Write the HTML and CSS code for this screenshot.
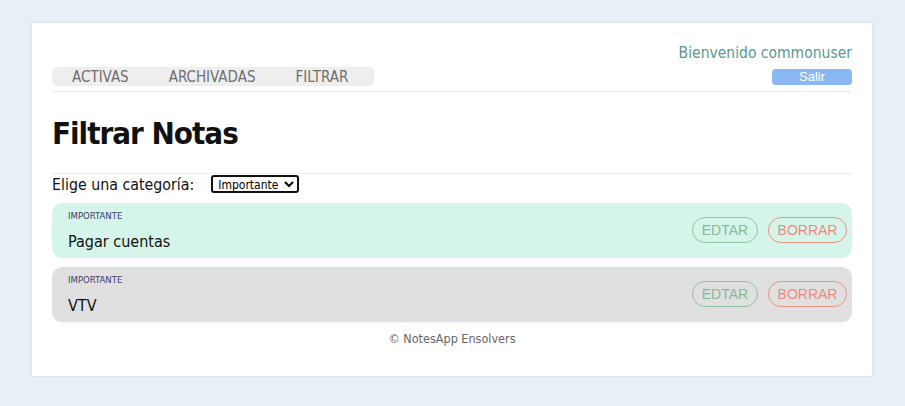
FILE: index.html
```html
<!DOCTYPE html>
<html lang="es">
<head>
<meta charset="utf-8">
<title>NotesApp</title>
<link rel="stylesheet" href="styles.css">
</head>
<body>
<div class="card">
  <header class="top">
    <nav class="nav">
      <a class="nav-item">ACTIVAS</a>
      <a class="nav-item">ARCHIVADAS</a>
      <a class="nav-item">FILTRAR</a>
    </nav>
    <div class="user">
      <div class="welcome">Bienvenido commonuser</div>
      <button class="logout">Salir</button>
    </div>
  </header>
  <h1 class="title">Filtrar Notas</h1>
  <div class="filter">
    <label class="filter-label">Elige una categoría:</label>
    <select class="filter-select"><option>Importante</option></select>
  </div>
  <div class="notes">
    <div class="note note-green">
      <div class="note-body">
        <div class="note-cat">IMPORTANTE</div>
        <div class="note-title">Pagar cuentas</div>
      </div>
      <div class="note-actions">
        <button class="btn btn-edit">EDTAR</button>
        <button class="btn btn-del">BORRAR</button>
      </div>
    </div>
    <div class="note note-grey">
      <div class="note-body">
        <div class="note-cat">IMPORTANTE</div>
        <div class="note-title">VTV</div>
      </div>
      <div class="note-actions">
        <button class="btn btn-edit">EDTAR</button>
        <button class="btn btn-del">BORRAR</button>
      </div>
    </div>
  </div>
  <footer class="footer">© NotesApp Ensolvers</footer>
</div>
</body>
</html>
```

FILE: styles.css
```css
* { box-sizing: border-box; }
html, body { margin: 0; }
body {
  background: #e9eff7;
  padding: 22px 32px 0 31px;
  font-family: "DejaVu Sans Condensed", "DejaVu Sans", sans-serif;
  color: #111;
}
.card {
  background: #fff;
  border: 1px solid #dde4ee;
  box-shadow: 0 0 3px rgba(0,0,0,0.06);
  height: 355px;
  padding: 20px 20px 0 20px;
}
.top {
  display: flex;
  justify-content: space-between;
  align-items: flex-end;
  border-bottom: 1px solid #eceef0;
  padding-bottom: 5px;
}
.nav {
  display: flex;
  background: #eeeeee;
  border-radius: 5px;
  height: 19px;
  align-items: center;
  padding: 0 20px;
  gap: 40px;
  width: 322px;
}
.nav-item {
  font-size: 15px;
  color: #6e6e6e;
  text-decoration: none;
}
.user {
  display: flex;
  flex-direction: column;
  align-items: flex-end;
}
.welcome {
  color: #5a9696;
  font-size: 15.5px;
  line-height: 20px;
  margin-bottom: 6px;
}
.logout {
  width: 80px;
  height: 16px;
  border: none;
  border-radius: 4px;
  background: #8ab8f5;
  color: #fff;
  font-family: "Liberation Sans", Arial, sans-serif;
  font-size: 13px;
  padding: 0;
  line-height: 16px;
  margin-bottom: 1px;
}
.title {
  font-size: 31px;
  letter-spacing: -1px;
  font-weight: bold;
  margin: 0;
  padding: 23px 0 21px;
  line-height: 37px;
  border-bottom: 1px solid #eceef0;
}
.filter {
  display: flex;
  align-items: center;
  gap: 17px;
  height: 20px;
  margin-top: 0;
}
.filter-label {
  font-size: 15.8px;
}
.filter-select {
  font-family: "DejaVu Sans Condensed", sans-serif;
  font-size: 12px;
  height: 18px;
  width: 88px;
  border: 2px solid #111;
  border-radius: 3px;
  background: #fff;
  padding: 0 1px;
}
.notes {
  display: flex;
  flex-direction: column;
  gap: 9px;
  margin-top: 9px;
}
.note {
  display: flex;
  justify-content: space-between;
  align-items: center;
  height: 55px;
  border-radius: 10px;
  padding: 0 5px 0 16px;
}
.note-green { background: #d6f5ea; }
.note-grey { background: #e0e0e0; box-shadow: 0 1px 2px rgba(0,0,0,0.05); }
.note-cat {
  font-size: 9.5px;
  color: #3d3d6b;
  margin-top: 0;
}
.note-title {
  font-size: 16px;
  margin-top: 11px;
}
.note-actions {
  display: flex;
  gap: 10px;
  margin-top: -1px;
}
.btn {
  background: transparent;
  height: 26px;
  border-radius: 13px;
  font-family: "Liberation Sans", Arial, sans-serif;
  font-size: 14px;
  padding: 0;
}
.btn-edit { width: 66px; border: 1px solid #8fc49c; color: #86b995; }
.btn-del { width: 79px; border: 1px solid #ef8f88; color: #ea8a82; }
.footer {
  text-align: center;
  font-size: 12.5px;
  color: #666;
  margin-top: 9px;
}
```
